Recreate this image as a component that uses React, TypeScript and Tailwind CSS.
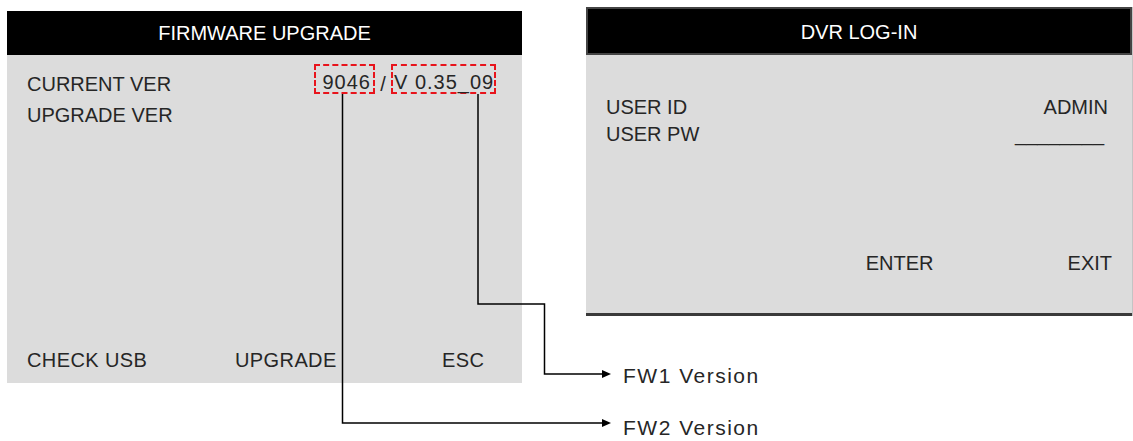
export default function App() {
  return (
    <div className="relative w-[1133px] h-[441px] bg-white overflow-hidden font-['Liberation_Sans',Arial,sans-serif] text-[#262626]">
      <div className="flex items-start">
        {/* firmware upgrade panel */}
        <div className="ml-[7px] mt-[11px] w-[515px] h-[372px] flex flex-col bg-[#dcdcdc]">
          <div className="h-[44px] bg-black text-white text-[20px] flex items-center justify-center">
            FIRMWARE UPGRADE
          </div>
          <div className="flex-1 flex flex-col pl-[20px] pr-[26px] pt-[9px] pb-[13px] text-[20px]">
            <div className="flex items-end justify-between h-[30px]">
              <span className="leading-[20px]">CURRENT VER</span>
              <div className="flex items-end whitespace-nowrap">
                <span className="w-[61px] h-[30px] border-2 border-dashed border-[#e8141c] flex items-end justify-end pr-[2px] leading-[20px] tracking-[1px]">
                  9046
                </span>
                <span className="w-[16px] text-center leading-[20px]">/</span>
                <span className="w-[105px] h-[30px] border-2 border-dashed border-[#e8141c] flex items-end pl-[1px] leading-[20px] tracking-[1px] whitespace-nowrap">
                  V 0.35_09
                </span>
              </div>
            </div>
            <div className="mt-[11px] leading-[20px]">UPGRADE VER</div>
            <div className="mt-auto flex leading-[20px] tracking-[0.4px]">
              <span className="w-[208px]">CHECK USB</span>
              <span className="w-[207px]">UPGRADE</span>
              <span>ESC</span>
            </div>
          </div>
        </div>

        {/* login panel */}
        <div className="ml-[64px] mt-[7px] w-[547px] h-[309px] flex flex-col bg-[#dcdcdc] border-r border-[#c4c4c4]">
          <div className="h-[48px] bg-black border-2 border-[#444] text-white text-[20px] flex items-center justify-center pt-[2px]">
            DVR LOG-IN
          </div>
          <div className="flex-1 flex flex-col pl-[20px] pr-[24px] pt-[39px] pb-[40px] text-[20px] border-b-[3px] border-[#3a3a3a]">
            <div className="flex justify-between leading-[27px]">
              <span>USER ID</span>
              <span>ADMIN</span>
            </div>
            <div className="flex justify-between leading-[27px]">
              <span>USER PW</span>
              <span className="mr-[4px]">________</span>
            </div>
            <div className="mt-auto flex justify-end leading-[20px]">
              <span className="mr-[134px]">ENTER</span>
              <span className="mr-[-4px]">EXIT</span>
            </div>
          </div>
        </div>
      </div>

      {/* annotation connectors */}
      <svg className="absolute inset-0 pointer-events-none" width="1133" height="441" viewBox="0 0 1133 441">
        <path d="M342.5 94 V423 H603" fill="none" stroke="#000" strokeWidth="1.5" />
        <polygon points="602,419 611,423 602,427" fill="#000" />
        <path d="M478 94 V304 H544.5 V374 H603" fill="none" stroke="#000" strokeWidth="1.5" />
        <polygon points="602,370 611,374 602,378" fill="#000" />
      </svg>
      <div className="absolute left-[623px] top-[363px] text-[21px] leading-[26px] tracking-[1.5px]">FW1 Version</div>
      <div className="absolute left-[623px] top-[415px] text-[21px] leading-[26px] tracking-[1.5px]">FW2 Version</div>
    </div>
  );
}
